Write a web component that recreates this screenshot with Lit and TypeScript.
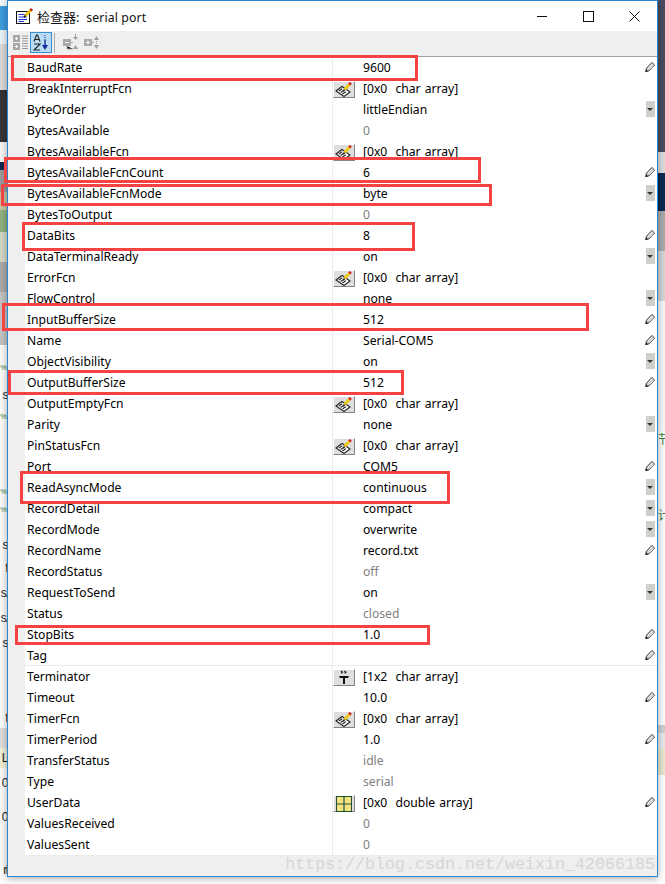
import { LitElement, html, css, svg } from "lit";
import { customElement } from "lit/decorators.js";

type Row = [string, string, string?, string?];
// name, value, button kind (c callback / t terminator / g grid), end (p pencil / d dropdown / x read-only)
const ROWS: Row[] = [
  ["BaudRate", "9600", "", "p"],
  ["BreakInterruptFcn", "[0x0  char array]", "c", ""],
  ["ByteOrder", "littleEndian", "", "d"],
  ["BytesAvailable", "0", "", "x"],
  ["BytesAvailableFcn", "[0x0  char array]", "c", ""],
  ["BytesAvailableFcnCount", "6", "", "p"],
  ["BytesAvailableFcnMode", "byte", "", "d"],
  ["BytesToOutput", "0", "", "x"],
  ["DataBits", "8", "", "p"],
  ["DataTerminalReady", "on", "", "d"],
  ["ErrorFcn", "[0x0  char array]", "c", ""],
  ["FlowControl", "none", "", "d"],
  ["InputBufferSize", "512", "", "p"],
  ["Name", "Serial-COM5", "", "p"],
  ["ObjectVisibility", "on", "", "d"],
  ["OutputBufferSize", "512", "", "p"],
  ["OutputEmptyFcn", "[0x0  char array]", "c", ""],
  ["Parity", "none", "", "d"],
  ["PinStatusFcn", "[0x0  char array]", "c", ""],
  ["Port", "COM5", "", "p"],
  ["ReadAsyncMode", "continuous", "", "d"],
  ["RecordDetail", "compact", "", "d"],
  ["RecordMode", "overwrite", "", "d"],
  ["RecordName", "record.txt", "", "p"],
  ["RecordStatus", "off", "", "x"],
  ["RequestToSend", "on", "", "d"],
  ["Status", "closed", "", "x"],
  ["StopBits", "1.0", "", "p"],
  ["Tag", "", "", "p"],
  ["Terminator", "[1x2  char array]", "t", ""],
  ["Timeout", "10.0", "", "p"],
  ["TimerFcn", "[0x0  char array]", "c", ""],
  ["TimerPeriod", "1.0", "", "p"],
  ["TransferStatus", "idle", "", "x"],
  ["Type", "serial", "", "x"],
  ["UserData", "[0x0  double array]", "g", "p"],
  ["ValuesReceived", "0", "", "x"],
  ["ValuesSent", "0", "", "x"],
];

// Annotation rectangles drawn over the window: left, top, right, bottom
const MARKS = [
  [11, 55, 418, 81],
  [4, 157, 481, 183],
  [1, 184, 492, 206],
  [22, 222, 415, 251],
  [2, 303, 589, 331],
  [8, 370, 404, 395],
  [20, 471, 450, 504],
  [15, 625, 430, 645],
];

// Desktop slivers visible at either side of the window: height, colour, text, text colour
const W = "#fbfbfb";
const G = "#2e7d32";
const K = "#222";
const LEFT: [number, string, string?, string?][] = [
  [6, "#f4f8fb"], [24, "#3f9bdc"], [14, "#e8f2f9"], [46, "#d9d9d9"], [52, "#34343a"],
  [20, "#f4f4f4"], [8, "#10284c"], [22, "#9a9a9a"], [18, "#c9c2a0"], [22, "#8fb07e"],
  [30, "#d2d8c4"], [30, "#a9a9a9"], [53, "#c2c2c2"],
  [15, W], [15, W, "%", G], [10, W], [20, W, "s", K], [2, W], [20, W, "%", G], [55, W],
  [20, W, "%", G], [16, W, "%", G], [17, W], [20, W, "s", K], [3, W], [20, W, "f", K],
  [5, W], [20, W, "s.", K], [5, W], [20, W, "s.", K], [5, W], [20, W, "s", K], [55, W],
  [20, W, "f", K], [20, "#dddddd"], [20, "#efefd6", "L", K], [5, W], [20, W, "0", K],
  [14, W], [20, W, "0", K], [33, W], [20, W, "ri", K], [4, W],
];
const RIGHT: [number, string, string?, string?][] = [
  [152, "#4c4c60"], [21, "#dcdcdc"], [38, "#0b2a50"], [40, "#a9a9a9"], [50, "#d4d4d4"],
  [130, "#f7f7f7"], [18, W, "节", G], [58, W], [18, W, "计", G],
  [200, W], [8, "#cfcfcf"], [16, "#e8e8e8"], [26, "#e6e6cc"], [109, "#ffffff"],
];

const pencil = svg`<svg width="11" height="12" viewBox="0 0 11 12"><path d="M.8 11 L1.600 7.400 L7.600 1 L10.500 3.800 L4.400 10.200 Z" fill="#cfcfcf" stroke="#333" stroke-width="1.100"/><path d="M3.200 7.200 L8.200 2.200 M4.800 8.800 L9.400 4" stroke="#fff" stroke-width=".9"/><path d="M.6 11.400 L1.300 8.800 L3.200 10.600 Z" fill="#111"/></svg>`;

const hand = svg`<svg width="18" height="15" viewBox="0 0 18 15"><path d="M1 9 L7 4.500 L15 10 L9 14.500 Z" fill="#fff" stroke="#222" stroke-width="1.100"/><path d="M3.800 9 L7.200 6.800 M5.600 10.500 L9 8.300 M7.400 12 L10.800 9.800" stroke="#222" stroke-width="1.100"/><path d="M9.500 7.500 L14.800 2" stroke="#eccb14" stroke-width="2.800"/><path d="M14.300 2.500 L15.800 .8" stroke="#d42020" stroke-width="2.800"/><path d="M9.500 7.500 L8.300 9.200" stroke="#222" stroke-width="1.600"/></svg>`;

const term = svg`<svg width="12" height="15" viewBox="0 0 12 15"><path d="M3 1 L4.500 2.200 L3 3.400 M6.500 1 L8 2.200 L6.500 3.400" fill="none" stroke="#111" stroke-width="1.100"/><path d="M1.500 6 H10.500 V8 H7 V14 H5 V8 H1.500 Z" fill="#111"/></svg>`;

const gridIcon = svg`<svg width="16" height="16" viewBox="0 0 16 16"><rect x=".5" y=".5" width="15" height="15" fill="#f6e47c" stroke="#20503c"/><path d="M8 0 V16 M0 8 H16" stroke="#20503c" stroke-width="1.200"/></svg>`;

const BTN = { c: hand, t: term, g: gridIcon } as Record<string, unknown>;

@customElement("app-root")
export class AppRoot extends LitElement {
  static styles = css`
    :host { display: flex; width: 665px; height: 884px; overflow: hidden; position: relative; background: #fbfbfb;
      font-family: "Noto Sans", "Noto Sans CJK SC", sans-serif; color: #000; }
    .strip { width: 7px; flex: none; display: flex; flex-direction: column; overflow: hidden; }
    .seg { flex: none; overflow: hidden; font: 12px/1 "Liberation Sans", "Noto Sans CJK SC", sans-serif; display: flex; align-items: center; white-space: nowrap; letter-spacing: -1.500px; }
    .seg.tiny { font-size: 7.500px; letter-spacing: 0; }
    .strip.left .seg { justify-content: flex-end; }
    .window { width: 651px; flex: none; height: 877px; box-sizing: border-box; border: 1px solid #2b87cf;
      background: #efefef; box-shadow: 0 1px 7px rgba(0,0,0,.35); display: flex; flex-direction: column; z-index: 1; }
    .title { height: 30px; flex: none; background: #fff; display: flex; align-items: center; padding-left: 8px; }
    .title .ttl { margin-left: 3px; font-size: 13px; white-space: pre; color: #111; }
    .title .en { font-size: 12.300px; letter-spacing: .1px; }
    .ctl { margin-left: auto; display: flex; }
    .ctl span { width: 46px; height: 30px; display: flex; align-items: center; justify-content: center; }
    .toolbar { height: 25px; flex: none; box-sizing: border-box; display: flex; align-items: center; padding: 0 0 2px 4px; background: #efefef; }
    .tool { display: flex; align-items: center; justify-content: center; }
    .t1 { width: 16px; margin-right: 2px; }
    .active { width: 20px; height: 19px; background: #b9dcf5; border: 1px solid #3a8fd0; }
    .sep { width: 1px; height: 20px; background: #a8a8a8; margin: 0 7px 0 2px; }
    .t2 { width: 17px; margin-right: 4px; }
    .table { border-top: 1px solid #a0a0a0; flex: none; }
    .row { display: grid; grid-template-columns: 17px 308px 1fr; height: 21px; box-sizing: border-box; font-size: 12.150px; line-height: 20px; }
    .gutter { background: #efefef; }
    .name { background: #fff; padding: 1px 0 0 2px; border-bottom: 1px solid #ececec; border-right: 1px solid #ececec; white-space: nowrap; overflow: hidden; }
    .val { background: #fff; border-bottom: 1px solid #ececec; display: flex; align-items: flex-start; white-space: pre; }
    .slot { width: 22px; height: 17px; flex: none; margin: 3px 8px 0 0; box-sizing: border-box; display: flex; align-items: center; justify-content: center; }
    .slot.btn { background: #dedede; border: 1px solid; border-color: #fff #858585 #858585 #fff; }
    .text { flex: 1; padding-top: 1px; word-spacing: .9px; }
    .text.off { color: #808080; }
    .end { width: 10px; flex: none; height: 20px; margin-right: 2px; display: flex; align-items: center; justify-content: center; }
    .dd { width: 9px; height: 16px; background: #cfcfcb; display: flex; align-items: center; justify-content: center; }
    .dd i { width: 0; height: 0; border: 3px solid transparent; border-top: 3px solid #333; border-bottom: 0; }
    .foot { flex: 1; display: flex; align-items: center; justify-content: flex-end; padding-right: 2px; overflow: hidden;
      font: 16.670px/1 "Liberation Mono", monospace; color: #d6d6d6; white-space: nowrap; }
    .mark { position: absolute; box-sizing: border-box; border: 3px solid #f44343; z-index: 2; pointer-events: none; }
  `;

  private strip(cls: string, segs: [number, string, string?, string?][]) {
    return html`<div class="strip ${cls}">
      ${segs.map(([h, bg, t, c]) => html`<div class="seg ${t === "%" ? "tiny" : ""}" style="height:${h}px;background:${bg};color:${c || "#000"}">${t || ""}</div>`)}
    </div>`;
  }

  private titleIcon() {
    return html`<svg width="18" height="17" viewBox="0 0 18 17">
      <rect x=".5" y="3.500" width="13" height="12" fill="#fff" stroke="#111"/>
      <path d="M2.500 6.500 H9 M2.500 9 H11 M2.500 11.500 H11 M2.500 13.500 H8" stroke="#1c2fd0" stroke-width="1"/>
      <path d="M9 8 L15 2" stroke="#e8c51c" stroke-width="3"/>
      <path d="M14.500 2.500 L16 1" stroke="#d42020" stroke-width="3"/>
      <path d="M9.500 7.500 L8 9.500" stroke="#222" stroke-width="1.500"/>
    </svg>`;
  }

  private toolbar() {
    return html`<div class="toolbar">
      <div class="tool t1"><svg width="15" height="17" viewBox="0 0 15 17">
        <rect x="0" y="1" width="7" height="7" fill="#a8a8a8"/><rect x="0" y="9" width="7" height="7" fill="#a8a8a8"/>
        <path d="M2 4.500 H5 M3.500 3 V6 M2 12.500 H5 M3.500 11 V14" stroke="#fff"/>
        <path d="M9 2 H15 M9 4.500 H15 M9 7 H15 M9 9.500 H15 M9 12 H15 M9 14.500 H15" stroke="#9a9a9a"/>
      </svg></div>
      <div class="tool active"><svg width="16" height="17" viewBox="0 0 16 17">
        <path d="M1 7.500 L3.500 1 H4.500 L7 7.500 M2 5.500 H6" fill="none" stroke="#222" stroke-width="1.100"/>
        <path d="M1 10 H7 L1 16 H7" fill="none" stroke="#222" stroke-width="1.200"/>
        <path d="M12 1 V2 M12 3 V4 M12 5 V6" stroke="#1a2a9c"/>
        <path d="M12 6 V13" stroke="#1a2a9c" stroke-width="1.400"/>
        <path d="M9 11 H15 L12 16 Z" fill="#1a2a9c"/>
      </svg></div>
      <div class="sep"></div>
      <div class="tool t2"><svg width="17" height="17" viewBox="0 0 17 17">
        <rect x="1" y="5" width="8" height="7" fill="#a8a8a8"/><path d="M3 8.500 H7" stroke="#fff"/>
        <path d="M5 12 V15 H11 M9 8.500 H11" stroke="#a8a8a8"/>
        <path d="M11 3 H16 L13.500 6 Z M11 15 H16 L13.500 11 Z" fill="#a0a0a0"/><path d="M13.500 0 V3" stroke="#a0a0a0"/>
      </svg></div>
      <div class="tool t2"><svg width="17" height="17" viewBox="0 0 17 17">
        <rect x="1" y="5" width="8" height="7" fill="#a8a8a8"/><path d="M3 8.500 H7 M5 6.500 V10.500" stroke="#fff"/>
        <path d="M9 8.500 H11" stroke="#a8a8a8"/>
        <path d="M11 6 H16 L13.500 2 Z M11 11 H16 L13.500 15 Z" fill="#a0a0a0"/><path d="M13.500 7 V10" stroke="#a0a0a0" stroke-dasharray="1 1"/>
      </svg></div>
    </div>`;
  }

  render() {
    return html`
      ${this.strip("left", LEFT)}
      <div class="window">
        <div class="title">
          ${this.titleIcon()}
          <span class="ttl">检查器:  <span class="en">serial port</span></span>
          <div class="ctl">
            <span><svg width="11" height="11" viewBox="0 0 11 11"><path d="M0 5.500 H10" stroke="#111"/></svg></span>
            <span><svg width="11" height="11" viewBox="0 0 11 11"><rect x=".5" y=".5" width="10" height="10" fill="none" stroke="#111"/></svg></span>
            <span><svg width="11" height="11" viewBox="0 0 11 11"><path d="M.5 .5 L10.500 10.500 M10.500 .5 L.5 10.500" stroke="#111"/></svg></span>
          </div>
        </div>
        ${this.toolbar()}
        <div class="table">
          ${ROWS.map(([n, v, b, e]) => html`<div class="row">
            <div class="gutter"></div>
            <div class="name">${n}</div>
            <div class="val">
              <div class="slot ${b ? "btn" : ""}">${b ? BTN[b] : ""}</div>
              <div class="text ${e === "x" ? "off" : ""}">${v}</div>
              <div class="end">${e === "p" ? pencil : e === "d" ? html`<div class="dd"><i></i></div>` : ""}</div>
            </div>
          </div>`)}
        </div>
        <div class="foot">https://blog.csdn.net/weixin_42066185</div>
      </div>
      ${this.strip("right", RIGHT)}
      ${MARKS.map(([l, t, r, b]) => html`<div class="mark" style="left:${l}px;top:${t}px;width:${r - l}px;height:${b - t}px"></div>`)}
    `;
  }
}
